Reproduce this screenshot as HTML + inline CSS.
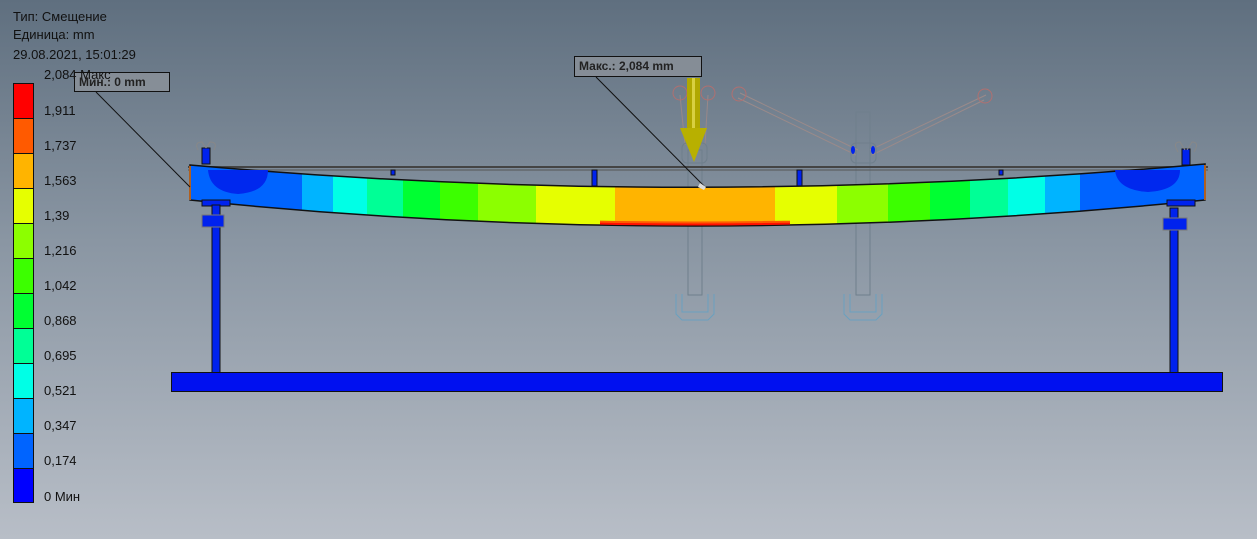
<!DOCTYPE html>
<html><head><meta charset="utf-8"><style>
html,body{margin:0;padding:0}
body{width:1257px;height:539px;overflow:hidden;background:linear-gradient(180deg,#5f6f7f 0%,#8a96a3 45%,#b8bec7 100%);font-family:"Liberation Sans","DejaVu Sans",sans-serif;position:relative}
.t{position:absolute;left:13px;font-size:13px;color:#111;white-space:nowrap}
.l{position:absolute;left:44px;font-size:13px;color:#111}
svg{position:absolute;left:0;top:0}
</style></head><body>
<svg width="1257" height="539" viewBox="0 0 1257 539">
<defs>
<linearGradient id="g" gradientUnits="userSpaceOnUse" x1="190" y1="0" x2="1205" y2="0">
<stop offset="0" stop-color="#0064ff"/>
<stop offset="0.1103" stop-color="#0064ff"/><stop offset="0.1103" stop-color="#00b4ff"/>
<stop offset="0.1409" stop-color="#00b4ff"/><stop offset="0.1409" stop-color="#00ffe6"/>
<stop offset="0.1744" stop-color="#00ffe6"/><stop offset="0.1744" stop-color="#00ff96"/>
<stop offset="0.2099" stop-color="#00ff96"/><stop offset="0.2099" stop-color="#00ff32"/>
<stop offset="0.2463" stop-color="#00ff32"/><stop offset="0.2463" stop-color="#3cff00"/>
<stop offset="0.2837" stop-color="#3cff00"/><stop offset="0.2837" stop-color="#8cff00"/>
<stop offset="0.3409" stop-color="#8cff00"/><stop offset="0.3409" stop-color="#e6ff00"/>
<stop offset="0.4187" stop-color="#e6ff00"/><stop offset="0.4187" stop-color="#ffb400"/>
<stop offset="0.5764" stop-color="#ffb400"/><stop offset="0.5764" stop-color="#e6ff00"/>
<stop offset="0.6374" stop-color="#e6ff00"/><stop offset="0.6374" stop-color="#8cff00"/>
<stop offset="0.6877" stop-color="#8cff00"/><stop offset="0.6877" stop-color="#3cff00"/>
<stop offset="0.7291" stop-color="#3cff00"/><stop offset="0.7291" stop-color="#00ff32"/>
<stop offset="0.7685" stop-color="#00ff32"/><stop offset="0.7685" stop-color="#00ff96"/>
<stop offset="0.8059" stop-color="#00ff96"/><stop offset="0.8059" stop-color="#00ffe6"/>
<stop offset="0.8424" stop-color="#00ffe6"/><stop offset="0.8424" stop-color="#00b4ff"/>
<stop offset="0.8768" stop-color="#00b4ff"/><stop offset="0.8768" stop-color="#0064ff"/>
<stop offset="1" stop-color="#0064ff"/>
</linearGradient>
<clipPath id="rc"><rect x="600" y="150" width="190" height="100"/></clipPath>
</defs>
<g stroke="#111" stroke-width="1">
<rect x="13.5" y="83.5" width="20" height="35" fill="#ff0000"/>
<rect x="13.5" y="118.5" width="20" height="35" fill="#ff5a00"/>
<rect x="13.5" y="153.5" width="20" height="35" fill="#ffb400"/>
<rect x="13.5" y="188.5" width="20" height="35" fill="#e6ff00"/>
<rect x="13.5" y="223.5" width="20" height="35" fill="#8cff00"/>
<rect x="13.5" y="258.5" width="20" height="35" fill="#3cff00"/>
<rect x="13.5" y="293.5" width="20" height="35" fill="#00ff32"/>
<rect x="13.5" y="328.5" width="20" height="35" fill="#00ff96"/>
<rect x="13.5" y="363.5" width="20" height="35" fill="#00ffe6"/>
<rect x="13.5" y="398.5" width="20" height="35" fill="#00b4ff"/>
<rect x="13.5" y="433.5" width="20" height="35" fill="#0064ff"/>
<rect x="13.5" y="468.5" width="20" height="34" fill="#0000ff"/>
</g>
<g fill="none" stroke="#6f7f8c" stroke-width="1">
<rect x="688" y="150" width="14" height="145"/>
<rect x="856" y="112" width="14" height="183"/>
<path d="M676 294 v20 l6 6 h26 l6 -6 v-20 M682 294 v18 h26 v-18" stroke="#6aa0c0"/>
<path d="M844 294 v20 l6 6 h26 l6 -6 v-20 M850 294 v18 h26 v-18" stroke="#6aa0c0"/>
<path d="M685 145 L680 95 M705 145 L708 95" stroke="#998888"/>
<path d="M740 93 L858 150 M986 95 L870 150 M738 98 L856 155 M984 100 L872 155" stroke="#9a8a8a"/>
<circle cx="680" cy="93" r="7" stroke="#b07070"/><circle cx="708" cy="93" r="7" stroke="#b07070"/>
<circle cx="739" cy="94" r="7" stroke="#b07070"/><circle cx="985" cy="96" r="7" stroke="#b07070"/>
<rect x="851" y="143" width="25" height="20" rx="5"/>
<rect x="682" y="143" width="25" height="20" rx="5"/>
</g>
<ellipse cx="853" cy="150" rx="2" ry="4" fill="#0022ee"/><ellipse cx="873" cy="150" rx="2" ry="4" fill="#0022ee"/>
<rect x="687" y="78" width="13" height="50" fill="#b0a800"/>
<rect x="692" y="78" width="3" height="50" fill="#d8d040"/>
<path d="M680 128 L707 128 L694 162 Z" fill="#b8b000"/>
<line x1="188" y1="167" x2="1208" y2="167" stroke="#444" stroke-width="2"/>
<line x1="188" y1="170" x2="1208" y2="170" stroke="#555" stroke-width="1"/>
<rect x="592" y="170" width="5" height="16" fill="#0022ee" stroke="#111"/>
<rect x="797" y="170" width="5" height="16" fill="#0022ee" stroke="#111"/>
<rect x="391" y="170" width="4" height="5" fill="#0022ee" stroke="#111"/>
<rect x="999" y="170" width="4" height="5" fill="#0022ee" stroke="#111"/>
<path d="M190 165 Q693 210 1205 164 L1205 200 Q693 252 190 200 Z" fill="url(#g)" stroke="#111" stroke-width="1.5"/>
<path d="M190 197 Q693 249 1205 197" fill="none" stroke="#ff5a00" stroke-width="3" clip-path="url(#rc)"/>
<path d="M190 198.5 Q693 250.5 1205 198.5" fill="none" stroke="#ff1000" stroke-width="2" clip-path="url(#rc)"/>
<path d="M208 170 L268 170 Q268 192 238 194 Q210 192 208 170 Z" fill="#0028ee"/>
<path d="M1115 170 L1180 170 Q1180 190 1148 192 Q1117 190 1115 170 Z" fill="#0028ee"/>
<path d="M190 166 L190 200" stroke="#b06020" stroke-width="2"/>
<path d="M1205 165 L1205 200" stroke="#b06020" stroke-width="2"/>
<rect x="202" y="148" width="8" height="16" fill="#0022ee" stroke="#111"/>
<rect x="1182" y="149" width="8" height="16" fill="#0022ee" stroke="#111"/>
<path d="M198 150 q-4 -8 4 -8 l4 6 M214 150 q4 -8 -4 -8 l-4 6" fill="none" stroke="#888"/>
<path d="M1178 152 q-6 -10 2 -10 l5 8 M1194 152 q6 -10 -2 -10 l-5 8" fill="none" stroke="#888"/>
<rect x="202" y="200" width="28" height="6" fill="#0022ee" stroke="#111"/>
<rect x="212" y="205" width="8" height="168" fill="#0022ee" stroke="#111"/>
<rect x="202" y="215" width="22" height="12" fill="#0022ee" stroke="#777"/>
<rect x="1167" y="200" width="28" height="6" fill="#0022ee" stroke="#111"/>
<rect x="1170" y="208" width="8" height="165" fill="#0022ee" stroke="#111"/>
<rect x="1163" y="218" width="24" height="12" fill="#0022ee" stroke="#777"/>
<rect x="171.5" y="372.5" width="1051" height="19" fill="#0010f0" stroke="#111"/>
<line x1="96" y1="92" x2="190" y2="187" stroke="#111"/>
<line x1="596" y1="77" x2="705" y2="187" stroke="#111"/>
<rect x="74.5" y="72.5" width="95" height="19" fill="#8c929a" fill-opacity="0.8" stroke="#111"/>
<rect x="574.5" y="56.5" width="127" height="20" fill="#8c929a" fill-opacity="0.8" stroke="#111"/>
<path d="M700 183 l6 4 -2 3 -6 -3z" fill="#ddd"/>
</svg>
<div class="t" style="top:9px">Тип: Смещение</div>
<div class="t" style="top:27px">Единица: mm</div>
<div class="t" style="top:47px">29.08.2021, 15:01:29</div>
<div class="l" style="top:67px">2,084 Макс</div>
<div class="t" style="left:79px;top:75px;font-size:12px;font-weight:bold;color:#222">Мин.: 0 mm</div>
<div class="t" style="left:579px;top:59px;font-size:12px;font-weight:bold;color:#222">Макс.: 2,084 mm</div>
<div class="l" style="top:103px">1,911</div>
<div class="l" style="top:138px">1,737</div>
<div class="l" style="top:173px">1,563</div>
<div class="l" style="top:208px">1,39</div>
<div class="l" style="top:243px">1,216</div>
<div class="l" style="top:278px">1,042</div>
<div class="l" style="top:313px">0,868</div>
<div class="l" style="top:348px">0,695</div>
<div class="l" style="top:383px">0,521</div>
<div class="l" style="top:418px">0,347</div>
<div class="l" style="top:453px">0,174</div>
<div class="l" style="top:489px">0 Мин</div>
</body></html>
